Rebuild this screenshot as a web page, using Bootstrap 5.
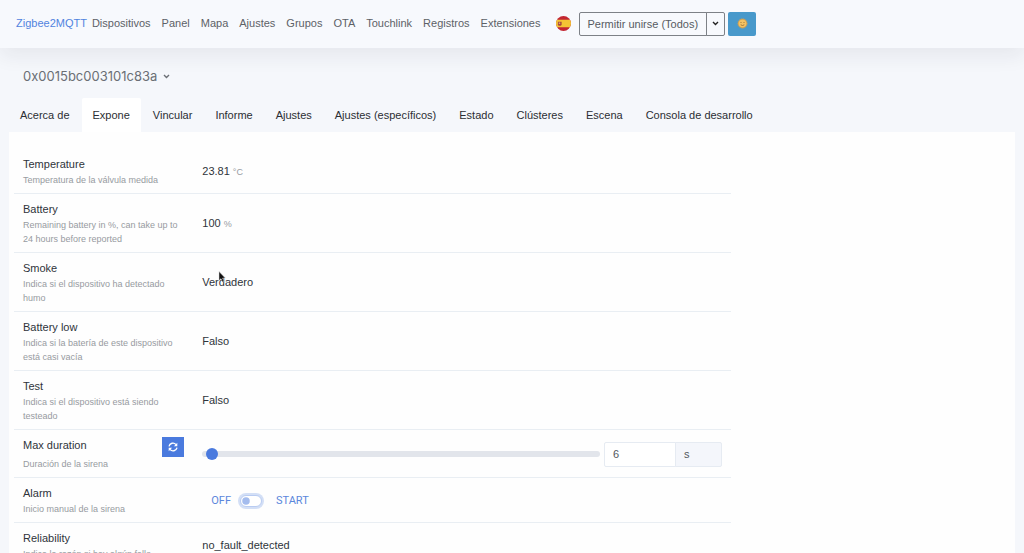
<!DOCTYPE html>
<html lang="es">
<head>
<meta charset="utf-8">
<meta name="viewport" content="width=device-width, initial-scale=1">
<title>Zigbee2MQTT</title>
<link href="https://cdn.jsdelivr.net/npm/bootstrap@5.3.0/dist/css/bootstrap.min.css" rel="stylesheet">
<style>
body::-webkit-scrollbar, html::-webkit-scrollbar { display: none; }
body { background: #f5f7fb; color: #2f343b; font-family: "Liberation Sans", Arial, sans-serif; font-size: 11px; line-height: 17px; }
a { text-decoration: none; }
.topbar { background: #f7f9fd; box-shadow: 0 8px 20px rgba(30, 35, 50, .07); padding: 11px 15px 12px 16px; }
.topbar .navbar-brand { color: #5183df; font-size: 11px; margin-right: 5px; padding: 0; }
.topbar .main-menu .nav-link { color: #5d6167; padding: 4px 0; }
.main-menu { gap: 11px; }
.flag-link { margin: 0 8px 0 15px; }
.flag { width: 15px; height: 15px; }
.join { margin-right: 3px; }
.join .btn { font-size: 11px; line-height: 16px; padding: 3px 8px; border-color: #7d8187; color: #565b62; --bs-btn-border-radius: 2px; }
.join .btn-caret { padding: 3px 5px; }
.btn-theme { background: #4899cb; border-radius: 2px; width: 28px; height: 24px; }
.device-name { color: #6b6f75; font-family: Inter, "Liberation Sans", sans-serif; font-size: 13px; line-height: 20px; padding: 18px 23px 12px; }
.device-name a { gap: 6px; }
.device-tabs { gap: 1px; padding: 0 9px; }
.device-tabs .nav-link { color: #2b2e33; border-radius: 2px 2px 0 0; padding: 9px 11px 8px; }
.device-tabs .nav-link.active { background: #fff; color: #2b2e33; }
.panel { background: #fefefe; margin: 0 9px; padding: 17px 5px 0; }
.features { width: 72%; }
.feature { border-bottom: 1px solid #e9eef3; padding: 7px 0 6px; }
.cell { padding-left: 9px; padding-right: 9px; }
.feature-text { color: #979ba1; font-size: 9px; line-height: 14px; }
.unit { color: #979ba1; font-size: 9px; }
.btn-refresh { background: #4a7ade; border-radius: 0; width: 22px; height: 20px; }
.slider { height: 12px; }
.slider::-webkit-slider-runnable-track { height: 6px; background: #e2e5eb; }
.slider::-webkit-slider-thumb { width: 12px; height: 12px; margin-top: -3px; background: #4a7ade; }
.amount { flex: 0 0 118px; }
.amount .form-control, .amount .input-group-text { border-color: #e6ebf2; border-radius: 2px; color: #53575d; font-size: 11px; line-height: 17px; padding: 3px 8px; }
.amount .input-group-text { background: #f4f6fb; width: 40%; }
.link-state { color: #5b87dc; font-family: Roboto, sans-serif; font-size: 11px; line-height: 17px; padding: 0 9px; }
.form-check-input.toggle { width: 22px; height: 12px; margin: 0 5px 0 0; border-color: #b9ccf2; box-shadow: 0 0 0 2px #d3dff6; --bs-form-switch-bg: url("data:image/svg+xml,%3csvg xmlns='http://www.w3.org/2000/svg' viewBox='-4 -4 8 8'%3e%3ccircle r='3' fill='%23a4bcee'/%3e%3c/svg%3e"); }
.pointer { position: absolute; left: 16px; top: -5px; }
</style>
</head>
<body>
<nav class="topbar navbar navbar-expand">
  <a class="navbar-brand" href="#">Zigbee2MQTT</a>
  <ul class="navbar-nav main-menu">
    <li><a class="nav-link" href="#">Dispositivos</a></li>
    <li><a class="nav-link" href="#">Panel</a></li>
    <li><a class="nav-link" href="#">Mapa</a></li>
    <li><a class="nav-link" href="#">Ajustes</a></li>
    <li><a class="nav-link" href="#">Grupos</a></li>
    <li><a class="nav-link" href="#">OTA</a></li>
    <li><a class="nav-link" href="#">Touchlink</a></li>
    <li><a class="nav-link" href="#">Registros</a></li>
    <li><a class="nav-link" href="#">Extensiones</a></li>
  </ul>
  <a class="flag-link d-flex" href="#" aria-label="Español">
    <svg class="flag" viewBox="0 0 16 16"><defs><clipPath id="round"><circle cx="8" cy="8" r="8"/></clipPath></defs><g clip-path="url(#round)"><path fill="#c32632" d="M0 0h16v16H0z"/><path fill="#f4c534" d="M0 4h16v8H0z"/><path fill="#a6493a" d="M2 6h4v3.500q-2 2-4 0z"/><path fill="#d9a18a" d="M3 7h1.500v1.500H3z"/></g></svg>
  </a>
  <div class="join btn-group">
    <button class="btn" type="button">Permitir unirse (Todos)</button>
    <button class="btn btn-caret d-flex align-items-center" type="button" aria-label="Elegir dispositivo"><svg width="7" height="5" viewBox="0 0 7 5" fill="none" stroke="#222" stroke-width="1.400"><path d="M1 1l2.500 2.500L6 1"/></svg></button>
  </div>
  <button class="btn btn-theme d-flex align-items-center justify-content-center p-0" type="button" aria-label="Tema">
    <svg width="11" height="11" viewBox="0 0 11 11"><circle cx="5.500" cy="5.500" r="4.700" fill="#dba34b" stroke="#b3a070" stroke-dasharray="1 1"/><circle cx="5.500" cy="5.500" r="3.800" fill="#f3c263"/><path d="M3.500 4.500h1M6.500 4.500h1M3.700 6.800q1.800 1.400 3.600 0" stroke="#8f6731" stroke-width=".8" fill="none"/></svg>
  </button>
</nav>
<main>
  <div class="device-name"><a class="text-reset d-inline-flex align-items-center" href="#">0x0015bc003101c83a<svg width="7" height="5" viewBox="0 0 7 5" fill="none" stroke="currentColor" stroke-width="1.400"><path d="M1 1l2.500 2.500L6 1"/></svg></a></div>
  <ul class="nav device-tabs">
    <li><a class="nav-link" href="#">Acerca de</a></li>
    <li><a class="nav-link active" aria-current="page" href="#">Expone</a></li>
    <li><a class="nav-link" href="#">Vincular</a></li>
    <li><a class="nav-link" href="#">Informe</a></li>
    <li><a class="nav-link" href="#">Ajustes</a></li>
    <li><a class="nav-link" href="#">Ajustes (específicos)</a></li>
    <li><a class="nav-link" href="#">Estado</a></li>
    <li><a class="nav-link" href="#">Clústeres</a></li>
    <li><a class="nav-link" href="#">Escena</a></li>
    <li><a class="nav-link" href="#">Consola de desarrollo</a></li>
  </ul>
  <section class="panel">
    <div class="features">
      <div class="feature row g-0 align-items-center">
        <div class="col-3 cell"><div>Temperature</div><div class="feature-text">Temperatura de la válvula medida</div></div>
        <div class="col-9 cell">23.81 <span class="unit">°C</span></div>
      </div>
      <div class="feature row g-0 align-items-center">
        <div class="col-3 cell"><div>Battery</div><div class="feature-text">Remaining battery in %, can take up to 24 hours before reported</div></div>
        <div class="col-9 cell">100 <span class="unit">%</span></div>
      </div>
      <div class="feature row g-0 align-items-center">
        <div class="col-3 cell"><div>Smoke</div><div class="feature-text">Indica si el dispositivo ha detectado humo</div></div>
        <div class="col-9 cell"><span class="position-relative">Verdadero<svg class="pointer" width="8" height="12" viewBox="0 0 8 12"><path d="M1 .5v9l2-1.800L4.500 11l1.500-.7-1.400-3.200h2.700z" fill="#111" stroke="#ddd" stroke-width=".5"/></svg></span></div>
      </div>
      <div class="feature row g-0 align-items-center">
        <div class="col-3 cell"><div>Battery low</div><div class="feature-text">Indica si la batería de este dispositivo está casi vacía</div></div>
        <div class="col-9 cell">Falso</div>
      </div>
      <div class="feature row g-0 align-items-center">
        <div class="col-3 cell"><div>Test</div><div class="feature-text">Indica si el dispositivo está siendo testeado</div></div>
        <div class="col-9 cell">Falso</div>
      </div>
      <div class="feature row g-0 align-items-center">
        <div class="col-3 cell">
          <div class="d-flex justify-content-between"><label for="duration">Max duration</label>
            <button class="btn btn-refresh d-flex align-items-center justify-content-center p-0" type="button" aria-label="Actualizar"><svg width="10" height="10" viewBox="0 0 10 10" fill="none" stroke="#fff" stroke-width="1.300"><path d="M1 4.300A4 4 0 0 1 8 2.600M9 5.700A4 4 0 0 1 2 7.400"/><path d="M9.300.8v3.400H5.900zM.7 9.200V5.800h3.400z" fill="#fff" stroke="none"/></svg></button></div>
          <div class="feature-text">Duración de la sirena</div>
        </div>
        <div class="col-9 cell d-flex align-items-center">
          <input class="form-range slider flex-fill me-1" id="duration" type="range" min="0" max="600" value="6">
          <div class="amount input-group flex-nowrap"><input class="form-control" type="text" value="6" aria-label="Segundos"><span class="input-group-text">s</span></div>
        </div>
      </div>
      <div class="feature row g-0 align-items-center">
        <div class="col-3 cell"><label for="alarm">Alarm</label><div class="feature-text">Inicio manual de la sirena</div></div>
        <div class="col-9 cell d-flex align-items-center">
          <button class="btn link-state border-0" type="button">OFF</button>
          <div class="form-switch d-flex p-0 m-0"><input class="form-check-input toggle" id="alarm" type="checkbox" role="switch"></div>
          <button class="btn link-state border-0" type="button">START</button>
        </div>
      </div>
      <div class="feature row g-0 align-items-center">
        <div class="col-3 cell"><div>Reliability</div><div class="feature-text">Indica la razón si hay algún fallo</div></div>
        <div class="col-9 cell">no_fault_detected</div>
      </div>
    </div>
  </section>
</main>
<script src="https://cdn.jsdelivr.net/npm/bootstrap@5.3.0/dist/js/bootstrap.bundle.min.js"></script>
</body>
</html>
